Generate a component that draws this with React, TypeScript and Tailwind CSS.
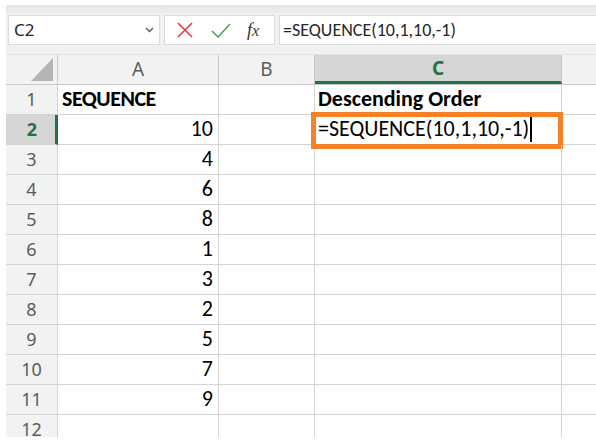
import React from 'react'

const cellFont = { fontFamily: 'Carlito, Lato, "Liberation Sans", sans-serif' }

const data: { a: string; c?: string; bold?: boolean }[] = [
  { a: 'SEQUENCE', c: 'Descending Order', bold: true },
  { a: '10', c: '=SEQUENCE(10,1,10,-1)' },
  { a: '4' },
  { a: '6' },
  { a: '8' },
  { a: '1' },
  { a: '3' },
  { a: '2' },
  { a: '5' },
  { a: '7' },
  { a: '9' },
  { a: '' },
]

function FormulaBar() {
  return (
    <div className="h-[50px] shrink-0 bg-gradient-to-b from-[#e4e4e4] via-[#f1f1f1] via-[20%] to-[#f1f1f1] pt-[10px] pl-[2px] flex gap-[4px] border-b border-[#e2e2e2]">
      <div className="w-[152px] h-[30px] bg-white border border-[#dcdcdc] flex items-center justify-between pl-[5px] pr-[4px]">
        <span className="text-[17px] text-[#262626] font-['Noto_Sans',sans-serif]">C2</span>
        <svg width="9" height="6" viewBox="0 0 9 6" className="mr-[1px]">
          <path d="M1 1 L4.5 4.5 L8 1" fill="none" stroke="#555" strokeWidth="1.3" />
        </svg>
      </div>
      <div className="w-[111px] h-[30px] bg-white border border-[#dcdcdc] flex items-center pl-[12px] gap-[18px]">
        <svg width="16" height="16" viewBox="0 0 16 16">
          <path d="M1 1 L15 15 M15 1 L1 15" stroke="#e8393d" strokeWidth="1.6" fill="none" />
        </svg>
        <svg width="20" height="15" viewBox="0 0 20 15">
          <path d="M1 8 L7 14 L19 1" stroke="#4aa65a" strokeWidth="1.6" fill="none" />
        </svg>
        <span className="text-[18px] italic text-[#333] font-['Liberation_Serif',serif] -ml-[2px]">
          f<span className="text-[16px]">x</span>
        </span>
      </div>
      <div className="flex-1 h-[30px] bg-white border border-r-0 border-[#dcdcdc] flex items-center pl-[3px]">
        <span className="text-[18px] text-[#262626]" style={cellFont}>=SEQUENCE(10,1,10,-1)</span>
      </div>
    </div>
  )
}

function HeaderRow() {
  return (
    <div className="h-[30px] shrink-0 flex bg-[#f2f2f2] border-b border-[#c9c9c9]">
      <div className="w-[52px] shrink-0 border-r border-[#c9c9c9] flex items-end justify-end pr-[4px] pb-[3px]">
        <svg width="22" height="23" viewBox="0 0 22 23">
          <polygon points="22,0 22,23 0,23" fill="#b5b5b5" />
        </svg>
      </div>
      <div className="w-[161px] shrink-0 border-r border-[#c9c9c9] flex items-center justify-center text-[19px] text-[#5c5c5c] font-['Noto_Sans',sans-serif]">
        A
      </div>
      <div className="w-[96px] shrink-0 border-r border-[#c9c9c9] flex items-center justify-center text-[19px] text-[#5c5c5c] font-['Noto_Sans',sans-serif]">
        B
      </div>
      <div className="w-[247px] shrink-0 border-r border-[#c9c9c9] bg-[#d6d6d6] border-b-[3px] border-b-[#217346] flex items-center justify-center text-[19px] font-bold text-[#217346] font-['Noto_Sans',sans-serif]">
        C
      </div>
      <div className="flex-1" />
    </div>
  )
}

function Row({ n, a, c, bold }: { n: number; a: string; c?: string; bold?: boolean }) {
  const selected = n === 2
  return (
    <div className="h-[30px] shrink-0 flex">
      <div
        className={
          selected
            ? 'w-[52px] shrink-0 bg-[#d6d6d6] border-b border-[#d4d4d4] border-r-[3px] border-r-[#217346] flex items-center justify-center pl-[3px] text-[18px] font-bold text-[#217346] font-[\'Noto_Sans\',sans-serif]'
            : 'w-[52px] shrink-0 bg-[#f2f2f2] border-b border-r border-[#d4d4d4] flex items-center justify-center text-[18px] text-[#5c5c5c] font-[\'Noto_Sans\',sans-serif]'
        }
      >
        {n}
      </div>
      <div
        className={`w-[161px] shrink-0 border-r border-b border-[#d4d4d4] flex items-end pb-[1px] text-[22px] leading-[28px] text-black ${bold ? 'font-bold justify-start pl-[4px] tracking-[-0.5px]' : 'justify-end pr-[5px]'}`}
        style={cellFont}
      >
        {a}
      </div>
      <div className="w-[96px] shrink-0 border-r border-b border-[#d4d4d4]" />
      <div
        className={`relative w-[247px] shrink-0 border-r border-b border-[#d4d4d4] flex items-end pb-[1px] pl-[3px] text-[22px] leading-[28px] text-black ${bold ? 'font-bold' : ''}`}
        style={cellFont}
      >
        {c}
        {selected && (
          <>
            <span className="inline-block w-[1.5px] h-[25px] bg-black ml-[1px] mb-[1px]" />
            <div className="absolute -left-[4px] -top-[3px] w-[252px] h-[37px] border-[5px] border-[#f58025]" />
          </>
        )}
      </div>
      <div className="flex-1 border-b border-[#d4d4d4]" />
    </div>
  )
}

export default function App() {
  return (
    <div className="w-[596px] h-[446px] bg-white overflow-hidden flex flex-col">
      <div className="h-[5px] shrink-0" />
      <div className="ml-[6px] flex flex-col">
        <FormulaBar />
        <HeaderRow />
        <div className="h-[352px] overflow-hidden flex flex-col">
          {data.map((r, i) => (
            <Row key={i} n={i + 1} a={r.a} c={r.c} bold={r.bold} />
          ))}
        </div>
      </div>
    </div>
  )
}
